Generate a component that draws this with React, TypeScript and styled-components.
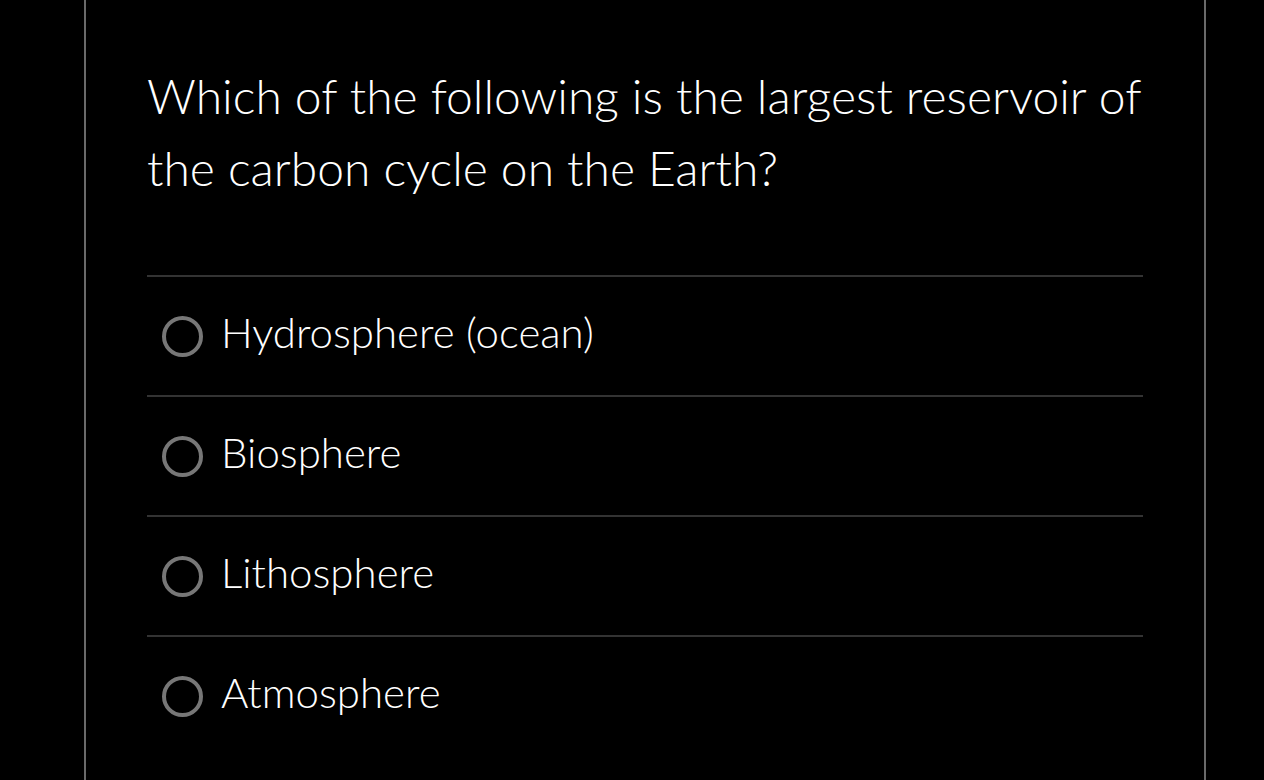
import styled, { createGlobalStyle } from 'styled-components';

const GlobalStyle = createGlobalStyle`
  html, body {
    margin: 0;
    padding: 0;
    background: #000;
    overflow: hidden;
  }
`;

const Page = styled.div`
  height: 780px;
  background: #000;
  font-family: Lato, 'Open Sans', sans-serif;
  color: #fff;
`;

const Card = styled.div`
  box-sizing: border-box;
  margin-left: 84px;
  width: 1122px;
  height: 780px;
  border-left: 2px solid #6a6a6a;
  border-right: 2px solid #6a6a6a;
  padding: 60px 61px 0;
  overflow: hidden;
`;

const Question = styled.h1`
  margin: 0;
  font-size: 48px;
  font-weight: 300;
  line-height: 72px;
`;

const Options = styled.div`
  margin-top: 71px;
  display: flex;
  flex-direction: column;
`;

const Option = styled.label`
  display: flex;
  align-items: center;
  gap: 18px;
  height: 118px;
  padding-left: 15px;
  border-top: 2px solid #333;
  font-size: 42px;
  font-weight: 300;
  cursor: pointer;
`;

const Radio = styled.span`
  width: 33px;
  height: 33px;
  border-radius: 50%;
  border: 4px solid #777;
  flex-shrink: 0;
`;

const Label = styled.span`
  position: relative;
  top: -4px;
`;

const answers = ['Hydrosphere (ocean)', 'Biosphere', 'Lithosphere', 'Atmosphere'];

export default function App() {
  return (
    <Page>
      <GlobalStyle />
      <Card>
        <Question>
          Which of the following is the largest reservoir of the carbon cycle on the Earth?
        </Question>
        <Options>
          {answers.map((a) => (
            <Option key={a}>
              <Radio />
              <Label>{a}</Label>
            </Option>
          ))}
        </Options>
      </Card>
    </Page>
  );
}
